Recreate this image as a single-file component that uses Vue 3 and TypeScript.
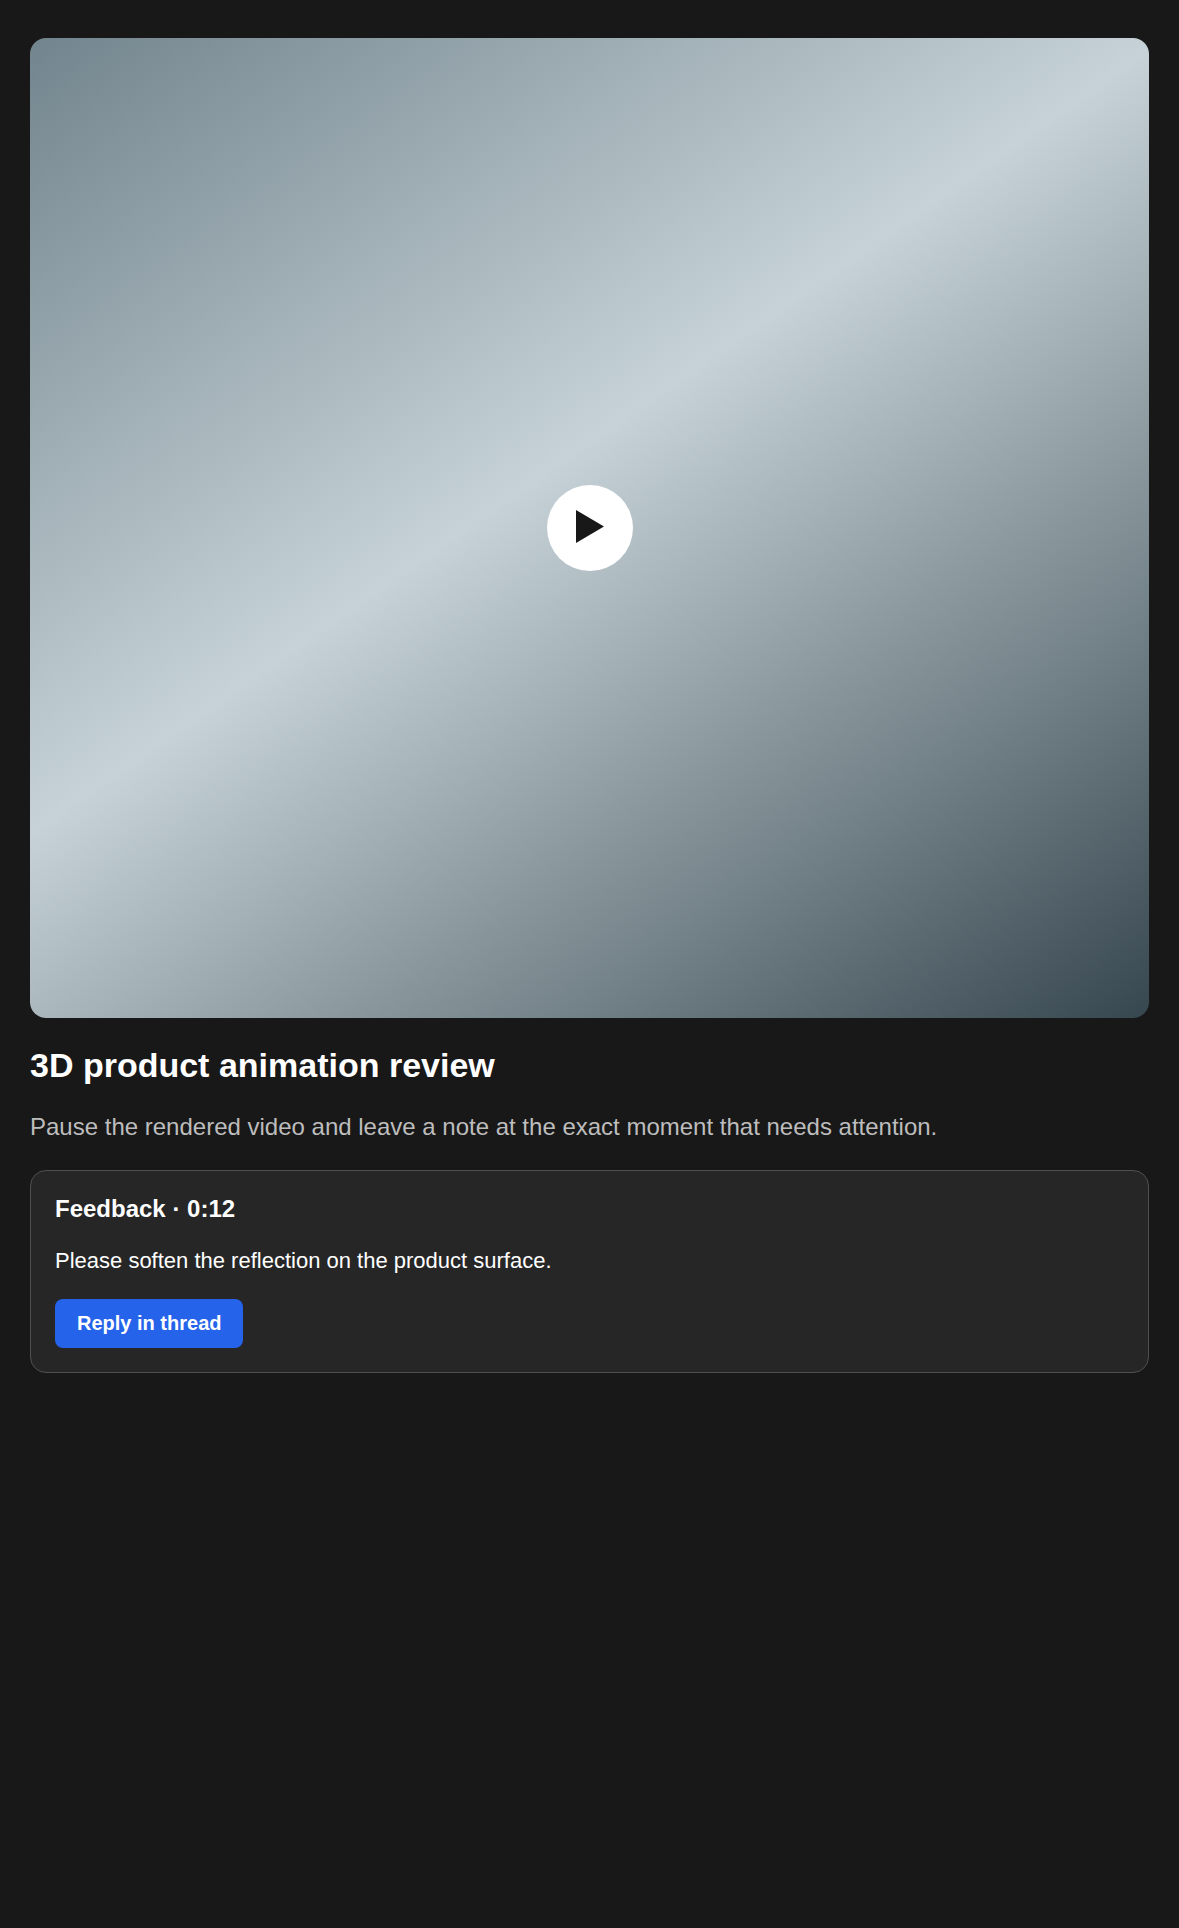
<script setup lang="ts">
const title = '3D product animation review'
const intro = 'Pause the rendered video and leave a note at the exact moment that needs attention.'
</script>

<template>
  <main class="page">
    <div class="video">
      <button class="play" aria-label="Play">
        <svg width="28" height="33" viewBox="0 0 28 33"><path d="M0 0 L28 16.5 L0 33 Z" fill="#181818" /></svg>
      </button>
    </div>
    <h1 class="title">{{ title }}</h1>
    <p class="intro">{{ intro }}</p>
    <section class="card">
      <h2 class="card-title">Feedback · 0:12</h2>
      <p class="card-body">Please soften the reflection on the product surface.</p>
      <button class="reply">Reply in thread</button>
    </section>
  </main>
</template>

<style>
html, body { margin: 0; background: #181818; }
</style>

<style scoped>
.page {
  box-sizing: border-box;
  min-height: 1928px;
  padding: 38px 30px;
  background: #181818;
  font-family: "Liberation Sans", Arial, sans-serif;
  color: #fff;
}
.video {
  height: 980px;
  border-radius: 16px;
  background: linear-gradient(145deg, #72848d 0%, #c6d2d7 45%, #37474f 100%);
  display: flex;
  align-items: center;
  justify-content: center;
}
.play {
  width: 86px;
  height: 86px;
  border: 0;
  padding: 0 0 3px 0;
  border-radius: 50%;
  background: #fff;
  display: flex;
  align-items: center;
  justify-content: center;
}
.title {
  margin: 25px 0 0;
  font-size: 34px;
  line-height: 44px;
  font-weight: 700;
}
.intro {
  margin: 22px 0 0;
  font-size: 24px;
  line-height: 36px;
  color: #bdbdbd;
}
.card {
  margin-top: 25px;
  padding: 24px;
  border: 1px solid #4f4f4f;
  border-radius: 16px;
  background: #262626;
}
.card-title {
  margin: 0;
  font-size: 24px;
  line-height: 28px;
  font-weight: 700;
}
.card-body {
  margin: 23px 0 0;
  font-size: 22px;
  line-height: 30px;
}
.reply {
  display: block;
  margin-top: 23px;
  height: 49px;
  padding: 0 22px;
  border: 0;
  border-radius: 8px;
  background: #2563eb;
  color: #fff;
  font-family: inherit;
  font-size: 20px;
  font-weight: 700;
}
</style>
